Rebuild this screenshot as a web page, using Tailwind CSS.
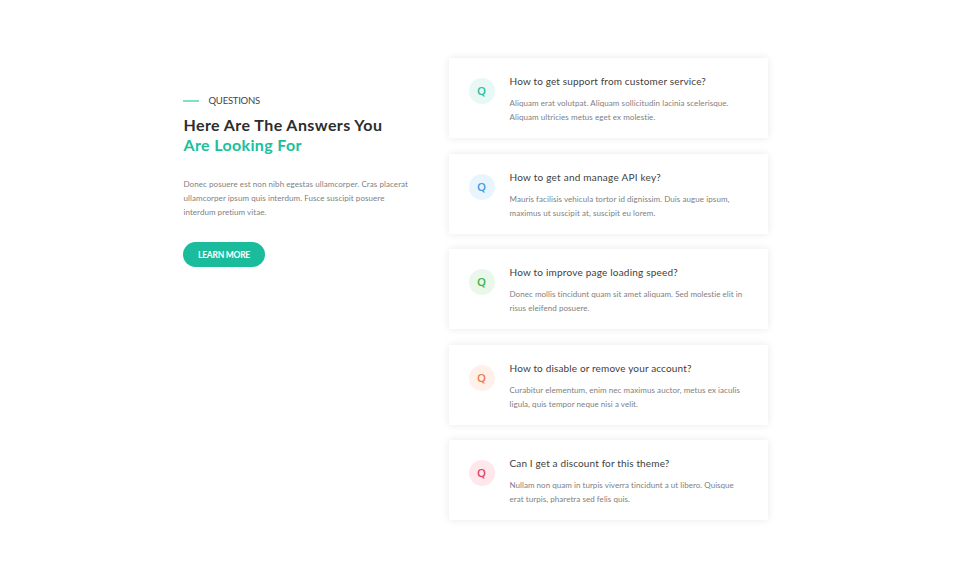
<!DOCTYPE html>
<html lang="en">
<head>
<meta charset="utf-8">
<title>Questions</title>
<script src="https://cdn.jsdelivr.net/npm/@tailwindcss/browser@4"></script>
</head>
<body class="bg-white font-['Lato',sans-serif]">
<main class="flex h-[579px] w-[954px] items-start overflow-hidden pl-[183px]">
  <section class="w-[266px] pt-[94px]">
    <div class="flex h-[14px] items-center">
      <span class="h-[2px] w-4 bg-[#85dcc7]"></span>
      <span class="ml-[9.5px] text-[9.5px] leading-[14px] tracking-[-0.23px] text-[#444]">QUESTIONS</span>
    </div>
    <h1 class="mt-[7px] pl-[0.5px] text-[16px] font-bold leading-5 text-[#2d2d2d]">
      <span class="block whitespace-nowrap tracking-[0.42px]">Here Are The Answers You</span>
      <span class="block whitespace-nowrap tracking-[0.35px] text-[#20bf9b]">Are Looking For</span>
    </h1>
    <p class="mt-[22px] whitespace-nowrap pl-[0.5px] text-[8px] leading-[14px] text-[#808080]">
      <span class="block tracking-[0.074px]">Donec posuere est non nibh egestas ullamcorper. Cras placerat</span>
      <span class="block tracking-[0.069px]">ullamcorper ipsum quis interdum. Fusce suscipit posuere</span>
      <span class="block tracking-[0.044px]">interdum pretium vitae.</span>
    </p>
    <button class="mt-[23px] flex h-[25px] w-[82px] items-center justify-center rounded-full bg-[#1abc9c] pt-px text-[8.5px] font-bold tracking-[-0.255px] text-white">LEARN MORE</button>
  </section>
  <section class="flex w-[319px] flex-col gap-[15.5px] pt-[58px] text-[8px] leading-[14px] text-[#808080]">
    <article class="flex h-20 bg-white pl-5 pt-5 shadow-[0_0_8px_rgba(0,0,0,0.09)]">
      <div class="flex size-[26px] shrink-0 items-center justify-center rounded-full bg-[#e8f8f5] pr-px font-['Open_Sans',sans-serif] text-[11.5px] font-semibold text-[#2bbd9e]">Q</div>
      <div class="-mt-[5px] ml-[14.5px] whitespace-nowrap">
        <h2 class="text-[10px] leading-4 tracking-[0.159px] text-[#404040]">How to get support from customer service?</h2>
        <p class="mt-[7px]"><span class="block tracking-[0.07px]">Aliquam erat volutpat. Aliquam sollicitudin lacinia scelerisque.</span><span class="block tracking-[0.067px]">Aliquam ultricies metus eget ex molestie.</span></p>
      </div>
    </article>
    <article class="flex h-20 bg-white pl-5 pt-5 shadow-[0_0_8px_rgba(0,0,0,0.09)]">
      <div class="flex size-[26px] shrink-0 items-center justify-center rounded-full bg-[#e9f5fe] pr-px font-['Open_Sans',sans-serif] text-[11.5px] font-semibold text-[#3a9fe6]">Q</div>
      <div class="-mt-[5px] ml-[14.5px] whitespace-nowrap">
        <h2 class="text-[10px] leading-4 tracking-[0.237px] text-[#404040]">How to get and manage API key?</h2>
        <p class="mt-[7px]"><span class="block tracking-[0.076px]">Mauris facilisis vehicula tortor id dignissim. Duis augue ipsum,</span><span class="block tracking-[0.082px]">maximus ut suscipit at, suscipit eu lorem.</span></p>
      </div>
    </article>
    <article class="flex h-20 bg-white pl-5 pt-5 shadow-[0_0_8px_rgba(0,0,0,0.09)]">
      <div class="flex size-[26px] shrink-0 items-center justify-center rounded-full bg-[#e9f8ea] pr-px font-['Open_Sans',sans-serif] text-[11.5px] font-semibold text-[#3fb34a]">Q</div>
      <div class="-mt-[5px] ml-[14.5px] whitespace-nowrap">
        <h2 class="text-[10px] leading-4 tracking-[0.203px] text-[#404040]">How to improve page loading speed?</h2>
        <p class="mt-[7px]"><span class="block tracking-[0.048px]">Donec mollis tincidunt quam sit amet aliquam. Sed molestie elit in</span><span class="block tracking-[0.067px]">risus eleifend posuere.</span></p>
      </div>
    </article>
    <article class="flex h-20 bg-white pl-5 pt-5 shadow-[0_0_8px_rgba(0,0,0,0.09)]">
      <div class="flex size-[26px] shrink-0 items-center justify-center rounded-full bg-[#fff1ea] pr-px font-['Open_Sans',sans-serif] text-[11.5px] font-semibold text-[#eb7b4c]">Q</div>
      <div class="-mt-[5px] ml-[14.5px] whitespace-nowrap">
        <h2 class="text-[10px] leading-4 tracking-[0.15px] text-[#404040]">How to disable or remove your account?</h2>
        <p class="mt-[7px]"><span class="block tracking-[0.063px]">Curabitur elementum, enim nec maximus auctor, metus ex iaculis</span><span class="block tracking-[0.055px]">ligula, quis tempor neque nisi a velit.</span></p>
      </div>
    </article>
    <article class="flex h-20 bg-white pl-5 pt-5 shadow-[0_0_8px_rgba(0,0,0,0.09)]">
      <div class="flex size-[26px] shrink-0 items-center justify-center rounded-full bg-[#ffe7eb] pr-px font-['Open_Sans',sans-serif] text-[11.5px] font-semibold text-[#dc4565]">Q</div>
      <div class="-mt-[5px] ml-[14.5px] whitespace-nowrap">
        <h2 class="text-[10px] leading-4 tracking-[0.144px] text-[#404040]">Can I get a discount for this theme?</h2>
        <p class="mt-[7px]"><span class="block tracking-[0.035px]">Nullam non quam in turpis viverra tincidunt a ut libero. Quisque</span><span class="block tracking-[0.064px]">erat turpis, pharetra sed felis quis.</span></p>
      </div>
    </article>
  </section>
</main>
</body>
</html>
